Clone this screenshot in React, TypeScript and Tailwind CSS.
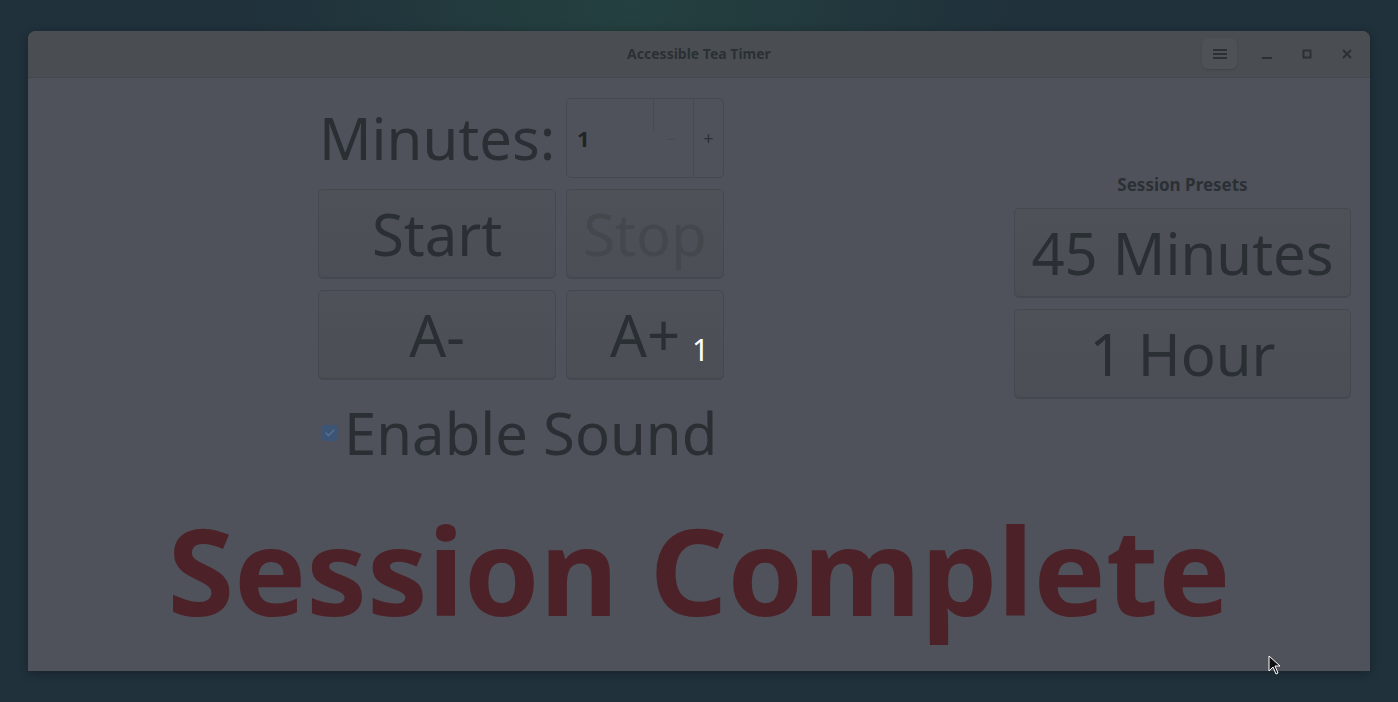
import { Check } from 'lucide-react';

const font = "font-['Noto_Sans','DejaVu_Sans',sans-serif]";

const Btn = ({ label, dim, className = '' }: { label: string; dim?: boolean; className?: string }) => (
  <button
    className={`relative flex items-center justify-center rounded-[5px] border border-[#45484e] bg-gradient-to-b from-[#4e5158] to-[#4b4e55] shadow-[inset_0_-1px_0_#44474d] text-[58px] leading-none ${dim ? 'text-[#44484d]' : 'text-[#2a2f34]'} ${className}`}
  >
    <span>{label}</span>
  </button>
);

const TitleBar = () => (
  <div className="relative flex items-center h-[47px] border-b border-dotted border-[#3f4247] bg-[#4a4e53] rounded-t-[8px]">
    <div className="flex-1 text-center text-[14px] font-bold text-[#2b3035] -mt-[2px]">Accessible Tea Timer</div>
    <div className="absolute right-[3px] top-[7px] flex items-center">
      <div className="w-[35px] h-[31px] rounded-[6px] bg-[#4e5257] shadow-[0_1px_2px_rgba(0,0,0,0.15)] flex items-center justify-center">
        <svg width="16" height="14" viewBox="0 0 16 14" fill="#2b3035">
          <rect x="1" y="2" width="14" height="2" />
          <rect x="1" y="6" width="14" height="2" />
          <rect x="1" y="10" width="14" height="2" />
        </svg>
      </div>
      <div className="w-[40px] flex justify-center ml-[10px]">
        <svg width="12" height="12" viewBox="0 0 12 12" fill="#2b3035">
          <rect x="1" y="9" width="10" height="2" />
        </svg>
      </div>
      <div className="w-[40px] flex justify-center">
        <svg width="12" height="12" viewBox="0 0 12 12" fill="none" stroke="#2b3035" strokeWidth="2">
          <rect x="2.5" y="2.5" width="7" height="7" />
        </svg>
      </div>
      <div className="w-[40px] flex justify-center">
        <svg width="12" height="12" viewBox="0 0 12 12" stroke="#2b3035" strokeWidth="2">
          <path d="M2 2 L10 10 M10 2 L2 10" />
        </svg>
      </div>
    </div>
  </div>
);

export default function App() {
  return (
    <div className={`${font} w-[1398px] h-[702px] overflow-hidden bg-[#20313b] relative`}>
      <div className="absolute inset-0 bg-[radial-gradient(ellipse_at_45%_0%,#24403f,transparent_35%)]" />
      <div className="relative pt-[31px] pl-[28px]">
        <div className="w-[1342px] h-[640px] flex flex-col bg-[#4f525a] rounded-t-[8px] shadow-[0_2px_10px_rgba(0,0,0,0.3)]">
          <TitleBar />
          <div className="flex-1 flex flex-col">
            <div className="flex items-start pt-[20px]">
              <div className="ml-[290px]">
                <div className="grid grid-cols-[238px_158px] gap-x-[10px] gap-y-[11px]">
                  <div className="h-[80px] flex items-center text-[58px] text-[#2a2f34] leading-none">
                    <span className="ml-[1px]">Minutes:</span>
                  </div>
                  <div className="h-[80px] rounded-[5px] border border-[#45484e] flex">
                    <div className="flex-1 flex items-center pl-[10px] text-[22px] font-bold text-[#1f2428]">1</div>
                    <div className="w-[40px] relative flex items-center justify-center text-[#474a50] text-[16px]">
                      <div className="absolute left-0 top-0 h-[32px] border-l border-[#464950]" />
                      <span className="mt-[2px] -ml-[4px]">−</span>
                    </div>
                    <div className="w-[30px] border-l border-[#464950] flex items-center justify-center text-[18px] text-[#2b3035]">
                      +
                    </div>
                  </div>
                  <Btn label="Start" className="h-[90px]" />
                  <Btn label="Stop" dim className="h-[90px]" />
                  <Btn label="A-" className="h-[90px]" />
                  <Btn label="A+" className="h-[90px]" />
                </div>
                <div className="ml-[4px] mt-[21px] flex items-center">
                  <div className="w-[16px] h-[16px] rounded-[3px] bg-[#3a5575] flex items-center justify-center">
                    <Check size={12} strokeWidth={3} color="#5a6f88" />
                  </div>
                  <span className="ml-[6px] text-[58px] leading-[1.1] text-[#2a2f34]">Enable Sound</span>
                </div>
              </div>
              <div className="ml-auto mr-[19px] mt-[78px] w-[337px] flex flex-col gap-[11px]">
                <div className="text-center text-[17px] font-bold text-[#2b3035] leading-none mb-[4px]">Session Presets</div>
                <Btn label="45 Minutes" className="h-[90px]" />
                <Btn label="1 Hour" className="h-[90px]" />
              </div>
            </div>
            <div className="flex justify-center mt-[32px]">
              <span className="text-[121px] font-bold leading-[1.2] text-[#4c2228]">Session Complete</span>
            </div>
          </div>
        </div>
      </div>
      <span className="absolute left-[692px] top-[335px] text-[30px] text-white leading-none">1</span>
      <svg className="absolute left-[1268px] top-[655px]" width="14" height="22" viewBox="0 0 14 22">
        <path d="M1 1 L1 16 L5 12 L8 19 L10 18 L7 11 L12 11 Z" fill="#111" stroke="#fff" strokeWidth="1" />
      </svg>
    </div>
  );
}
